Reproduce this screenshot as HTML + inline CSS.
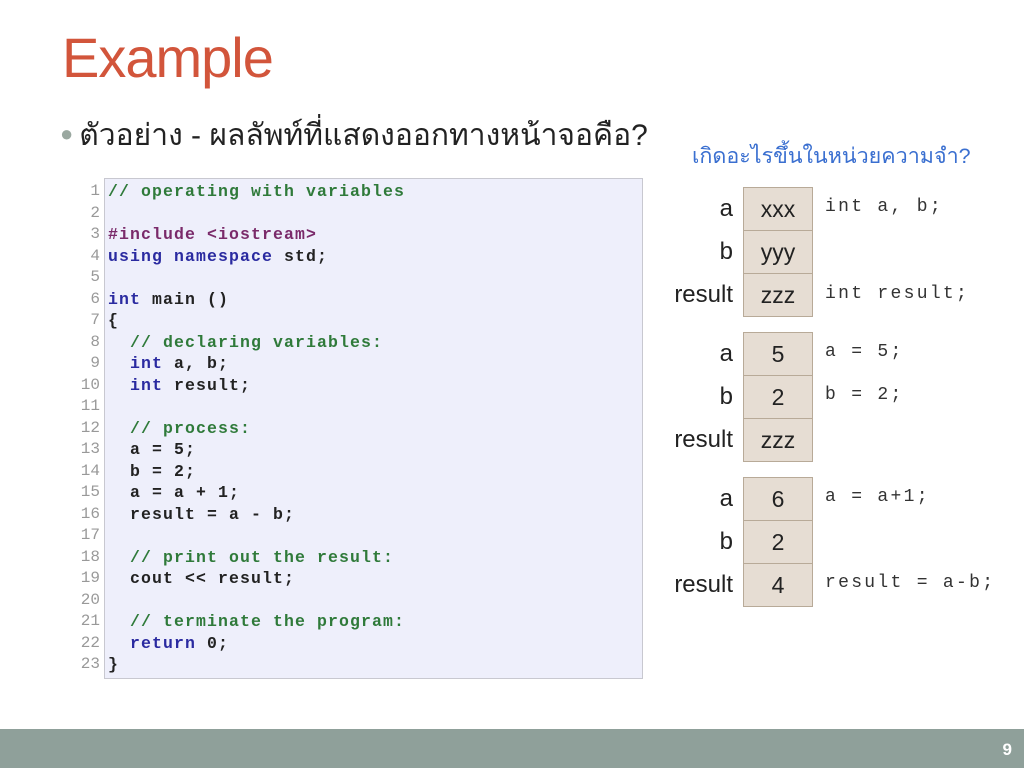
<!DOCTYPE html>
<html><head><meta charset="utf-8"><style>
body{margin:0;width:1024px;height:768px;background:#fff;position:relative;overflow:hidden;font-family:"Liberation Sans",sans-serif}
.t{position:absolute;left:62px;top:25px;font-size:56px;color:#d2553b;letter-spacing:-1px}
.sub{position:absolute;left:60px;top:112px;font-size:30px;color:#222;font-family:"Liberation Sans","Noto Sans CJK SC",sans-serif;white-space:nowrap}
.sub .b{color:#9aa8a0;font-size:22px;vertical-align:4px;margin-right:6px}
.q{position:absolute;left:692px;top:139px;font-size:21.5px;color:#3a6fd0;white-space:nowrap}
.code{position:absolute;left:104px;top:178px;width:537px;height:499px;background:#eeeffb;border:1px solid #c8c8d0}
.ln{position:absolute;left:78px;top:181px;width:22px;text-align:right;font:16px/21.5px "Liberation Mono",monospace;color:#999}
pre{margin:0;position:absolute;left:108px;top:181px;font:bold 16.5px/21.5px "Liberation Mono",monospace;letter-spacing:1.1px;color:#222}
.c{color:#2f7a3a}.k{color:#2a2aa0}.p{color:#7a2a6a}
.box{position:absolute;left:743px;width:68px;height:42px;background:#e6ddd3;border:1px solid #b8aa98;text-align:center;font-size:23px;line-height:42px;color:#222}
.lab{position:absolute;right:291px;font-size:24px;line-height:42px;color:#222}
.m{position:absolute;left:825px;font:18px "Liberation Mono",monospace;letter-spacing:2.3px;color:#333}
.ft{position:absolute;left:0;top:729px;width:1024px;height:39px;background:#8fa09a}
.pg{position:absolute;right:12px;top:740px;color:#fff;font-weight:bold;font-size:17px}
</style></head><body>
<div class="t">Example</div>
<div class="sub"><span class="b">●</span>ตัวอย่าง - ผลลัพท์ที่แสดงออกทางหน้าจอคือ?</div>
<div class="q">เกิดอะไรขึ้นในหน่วยความจำ?</div>
<div class="code"></div>
<div class="ln">1<br>2<br>3<br>4<br>5<br>6<br>7<br>8<br>9<br>10<br>11<br>12<br>13<br>14<br>15<br>16<br>17<br>18<br>19<br>20<br>21<br>22<br>23</div>
<pre><span class="c">// operating with variables</span>

<span class="p">#include &lt;iostream&gt;</span>
<span class="k">using namespace</span> std;

<span class="k">int</span> main ()
{
  <span class="c">// declaring variables:</span>
  <span class="k">int</span> a, b;
  <span class="k">int</span> result;

  <span class="c">// process:</span>
  a = 5;
  b = 2;
  a = a + 1;
  result = a - b;

  <span class="c">// print out the result:</span>
  cout &lt;&lt; result;

  <span class="c">// terminate the program:</span>
  <span class="k">return</span> 0;
}</pre>

<div class="lab" style="top:188px">a</div><div class="box" style="top:187px">xxx</div>
<div class="lab" style="top:231px">b</div><div class="box" style="top:230px">yyy</div>
<div class="lab" style="top:274px">result</div><div class="box" style="top:273px">zzz</div>
<div class="m" style="top:197px">int a, b;</div>
<div class="m" style="top:284px">int result;</div>

<div class="lab" style="top:333px">a</div><div class="box" style="top:332px">5</div>
<div class="lab" style="top:376px">b</div><div class="box" style="top:375px">2</div>
<div class="lab" style="top:419px">result</div><div class="box" style="top:418px">zzz</div>
<div class="m" style="top:342px">a = 5;</div>
<div class="m" style="top:385px">b = 2;</div>

<div class="lab" style="top:478px">a</div><div class="box" style="top:477px">6</div>
<div class="lab" style="top:521px">b</div><div class="box" style="top:520px">2</div>
<div class="lab" style="top:564px">result</div><div class="box" style="top:563px">4</div>
<div class="m" style="top:487px">a = a+1;</div>
<div class="m" style="top:573px">result = a-b;</div>

<div class="ft"></div><div class="pg">9</div>
</body></html>
